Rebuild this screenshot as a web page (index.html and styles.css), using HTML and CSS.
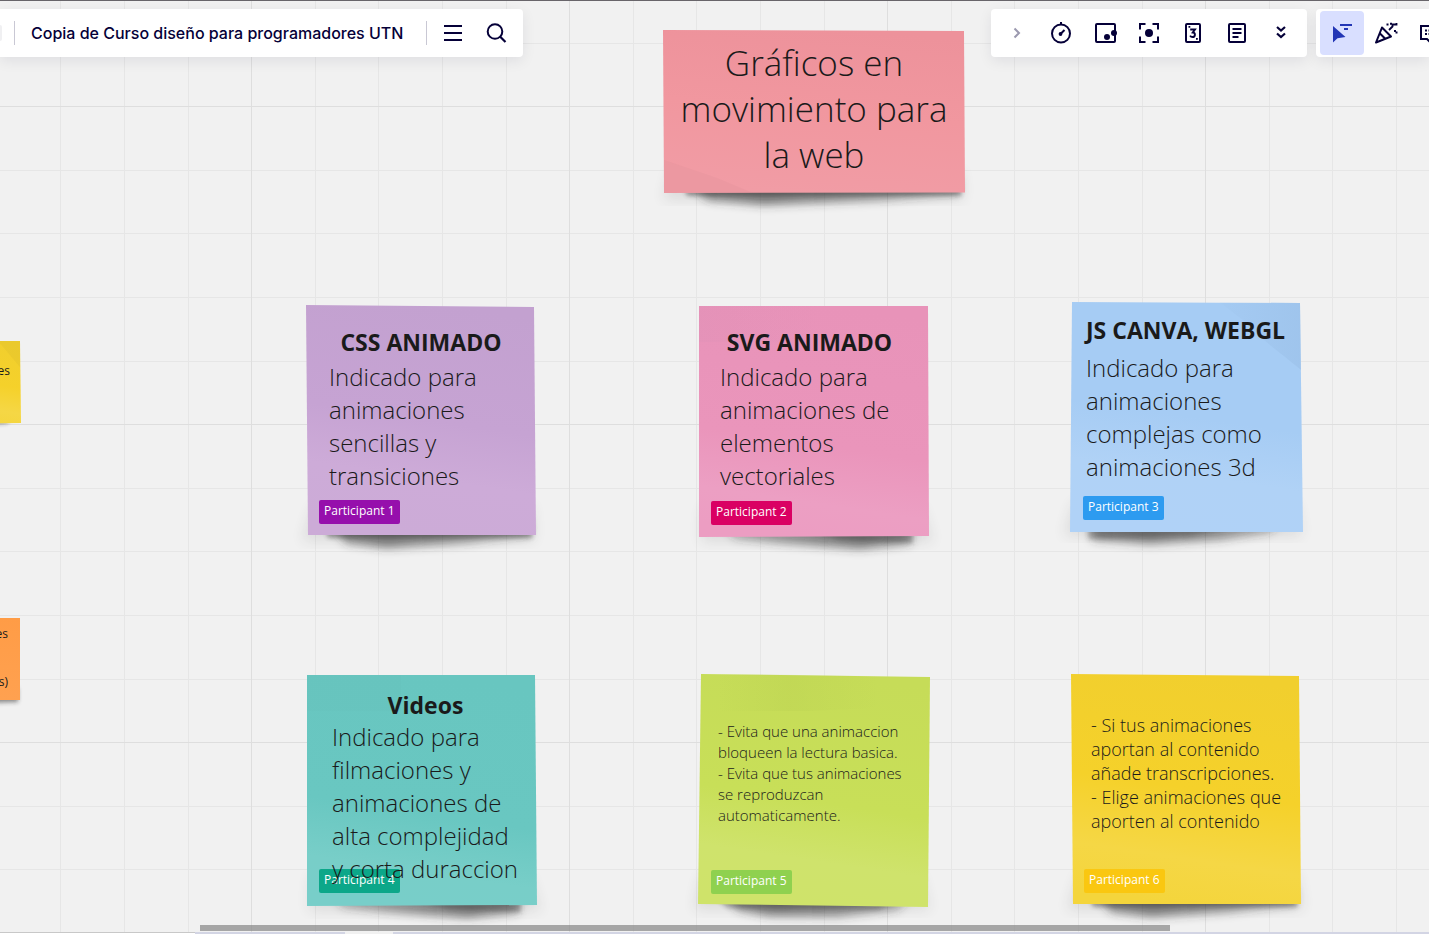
FILE: index.html
```html
<!DOCTYPE html>
<html lang="es">
<head>
<meta charset="utf-8">
<meta name="viewport" content="width=device-width, initial-scale=1">
<title>Copia de Curso diseño para programadores UTN</title>
<link rel="stylesheet" href="styles.css">
</head>
<body>
<svg class="defs" width="0" height="0" aria-hidden="true">
  <defs>
    <filter id="soft" x="-20%" y="-100%" width="140%" height="300%"><feGaussianBlur stdDeviation="5"/></filter>
    <filter id="edge" x="-20%" y="-100%" width="140%" height="300%"><feGaussianBlur stdDeviation="2"/></filter>
    <filter id="haze" x="-20%" y="-20%" width="140%" height="140%"><feGaussianBlur stdDeviation="7"/></filter>
    <linearGradient id="rose" x1="0.6" y1="0" x2="0.45" y2="1"><stop offset="0" stop-color="#ed929b"/><stop offset=".5" stop-color="#f1979f"/><stop offset="1" stop-color="#f19ca5"/></linearGradient>
    <linearGradient id="violet" x1="0.6" y1="0" x2="0.45" y2="1"><stop offset="0" stop-color="#c3a1d0"/><stop offset=".5" stop-color="#c6a3d3"/><stop offset=".75" stop-color="#cdabd8"/><stop offset="1" stop-color="#ccabd7"/></linearGradient>
    <linearGradient id="pink" x1="0.6" y1="0" x2="0.45" y2="1"><stop offset="0" stop-color="#e893b9"/><stop offset=".6" stop-color="#ea95bb"/><stop offset=".85" stop-color="#ec9fc3"/><stop offset="1" stop-color="#ec9dc2"/></linearGradient>
    <linearGradient id="blue" x1="0.6" y1="0" x2="0.45" y2="1"><stop offset="0" stop-color="#a6ccf4"/><stop offset=".5" stop-color="#a6ccf4"/><stop offset=".75" stop-color="#b0d2f6"/><stop offset="1" stop-color="#b0d2f7"/></linearGradient>
    <linearGradient id="teal" x1="0.6" y1="0" x2="0.45" y2="1"><stop offset="0" stop-color="#68c6c0"/><stop offset=".6" stop-color="#69c7c1"/><stop offset=".85" stop-color="#78cec8"/><stop offset="1" stop-color="#78cec9"/></linearGradient>
    <linearGradient id="lime" x1="0.6" y1="0" x2="0.45" y2="1"><stop offset="0" stop-color="#c6dc58"/><stop offset=".55" stop-color="#c8df58"/><stop offset=".8" stop-color="#cfe36c"/><stop offset="1" stop-color="#cfe36a"/></linearGradient>
    <linearGradient id="yellow" x1="0.6" y1="0" x2="0.45" y2="1"><stop offset="0" stop-color="#f1cf2e"/><stop offset=".5" stop-color="#f5d12a"/><stop offset=".8" stop-color="#f5d745"/><stop offset="1" stop-color="#f4d53c"/></linearGradient>
    <linearGradient id="orange" x1="0" y1="0" x2="0" y2="1"><stop offset="0" stop-color="#ff9c46"/><stop offset="1" stop-color="#ffa150"/></linearGradient>
    <linearGradient id="shadeL" x1="0" x2="1"><stop offset="0" stop-color="#333" stop-opacity=".5"/><stop offset=".3" stop-color="#333" stop-opacity=".6"/><stop offset="1" stop-color="#333" stop-opacity=".35"/></linearGradient>
    <linearGradient id="shadeR" x1="0" x2="1"><stop offset="0" stop-color="#333" stop-opacity=".35"/><stop offset=".75" stop-color="#333" stop-opacity=".6"/><stop offset="1" stop-color="#333" stop-opacity=".45"/></linearGradient>
    <linearGradient id="foldPink" x1="0" x2="1"><stop offset="0" stop-color="#d98fb5" stop-opacity=".25"/><stop offset="1" stop-color="#d98fb5" stop-opacity="0"/></linearGradient>
    <linearGradient id="foldLime" x1="0" x2="1"><stop offset="0" stop-color="#b8cf50" stop-opacity="0"/><stop offset=".45" stop-color="#b8cf50" stop-opacity=".3"/><stop offset="1" stop-color="#b8cf50" stop-opacity="0"/></linearGradient>
    <linearGradient id="foldBlue" x1="0" x2="1"><stop offset="0" stop-color="#98bde5" stop-opacity=".1"/><stop offset="1" stop-color="#98bde5" stop-opacity=".5"/></linearGradient>
  </defs>
</svg>

<header class="topbar">
  <div class="panel panel-board">
    <span class="logo-edge"></span>
    <span class="rule"></span>
    <h1 class="board-name">Copia de Curso diseño para programadores UTN</h1>
    <span class="rule"></span>
    <button class="tool" type="button" aria-label="Menú"><svg class="icon" viewBox="0 0 24 24"><path d="M3 5h18M3 12h18M3 19h18" stroke-width="2"/></svg></button>
    <button class="tool" type="button" aria-label="Buscar"><svg class="icon" viewBox="0 0 24 24"><circle cx="10" cy="10.5" r="7.300" stroke-width="2"/><path d="M15 15.5l5.500 5.500" stroke-width="2.200"/></svg></button>
  </div>
  <div class="panel panel-tools">
    <button class="tool muted" type="button" aria-label="Ocultar"><svg class="icon" viewBox="0 0 24 24"><path d="M9.500 7.500l4.500 4.500-4.500 4.500" stroke-width="2"/></svg></button>
    <button class="tool" type="button" aria-label="Temporizador"><svg class="icon" viewBox="0 0 24 24"><circle cx="12" cy="12.500" r="9" stroke-width="2"/><path d="M12 1v3M11.500 13l4-4" stroke-width="2"/><circle class="solid" cx="11.500" cy="13" r="1.900"/></svg></button>
    <button class="tool" type="button" aria-label="Marcos"><svg class="icon" viewBox="0 0 24 24"><rect x="3" y="3" width="19" height="18" rx="1" stroke-width="2"/><circle class="solid" cx="14" cy="16" r="3"/><circle class="solid" cx="21" cy="12" r="3"/></svg></button>
    <button class="tool" type="button" aria-label="Enfocar"><svg class="icon" viewBox="0 0 24 24"><path d="M3 8.500V3h5.500M15.500 3H21v5.500M21 15.500V21h-5.500M8.500 21H3v-5.500" stroke-width="2"/><circle class="solid" cx="12" cy="12" r="4"/></svg></button>
    <button class="tool" type="button" aria-label="Estimación"><svg class="icon" viewBox="0 0 24 24"><rect x="5" y="3" width="14" height="18" rx="1" stroke-width="2"/><path d="M9.200 8.500h4.800l-2.200 3c3 .2 2.700 4.500-.2 4.500-1.200 0-2-.5-2.500-1.400" stroke-width="1.900"/><path class="solid" d="M7.500 5h1.800v1.800H7.500zM15 17h1.800v1.800H15z"/></svg></button>
    <button class="tool" type="button" aria-label="Notas"><svg class="icon" viewBox="0 0 24 24"><rect x="4" y="3" width="16" height="18" rx="1" stroke-width="2"/><path d="M7.500 8h9M7.500 12h9M7.500 16h6" stroke-width="2"/></svg></button>
    <button class="tool" type="button" aria-label="Más"><svg class="icon" viewBox="0 0 24 24"><path d="M8 6l4 3.500 4-3.500M8 12.500l4 3.500 4-3.500" stroke-width="2.200"/></svg></button>
  </div>
  <div class="panel panel-collab">
    <button class="tool active" type="button" aria-label="Seleccionar"><svg class="icon" viewBox="0 0 24 24"><path class="solid" d="M3 5v16.500l4.500-4.300 8-1.200z"/><path d="M10 4h12M14 8h4" stroke-width="2"/></svg></button>
    <button class="tool" type="button" aria-label="Reacciones"><svg class="icon" viewBox="0 0 24 24"><path d="M8 6.500L2 21.500l15-6zM6 12.500l5 5" stroke-width="2" stroke-linejoin="round"/><path d="M15 9l4-4M18.500 6V3.500h4V2" stroke-width="1.800"/><path class="solid" d="M12.500 2.500h2v2h-2zM16 1.800h2v2h-2zM20 9h2v2h-2zM21.500 10.500h2v2h-2z"/></svg></button>
    <button class="tool" type="button" aria-label="Comentarios"><svg class="icon" viewBox="0 0 24 24"><path d="M3 5h18v13h-6l-3 3-3-3H3z" stroke-width="2"/><path d="M7 9.500h10M7 13h10" stroke-width="2" stroke-dasharray="2 1.500"/></svg></button>
  </div>
</header>

<main class="board">
  <article class="note note-heading">
    <svg class="paper" viewBox="0 0 302 163"><path d="M8 140h290l2 30H0z" fill="#222" opacity=".1" filter="url(#haze)"/><path d="M22 150H296V163L220 170 100 175 44 170z" fill="url(#shadeL)" filter="url(#soft)"/><path d="M20 155H298V166H24z" fill="#333" opacity=".4" filter="url(#edge)"/><path d="M0 0L301 1 302 162.500 1 163z" fill="url(#rose)"/><path d="M1 130L54 148 90 163H1z" fill="#d98f98" opacity=".22"/></svg>
    <p class="heading-text">Gráficos en<br>movimiento para<br>la web</p>
  </article>

  <article class="note note-css">
    <svg class="paper" viewBox="0 0 230 230"><path d="M8 200h218l2 36H-4z" fill="#222" opacity=".1" filter="url(#haze)"/><path d="M22 216H224V230L160 238 80 243 40 238z" fill="url(#shadeL)" filter="url(#soft)"/><path d="M18 222H226V233H22z" fill="#333" opacity=".4" filter="url(#edge)"/><path d="M0 0L228 2 230 230H2z" fill="url(#violet)"/></svg>
    <h2 class="note-title">CSS ANIMADO</h2>
    <p class="note-text">Indicado para<br>animaciones<br>sencillas y<br>transiciones</p>
    <span class="tag tag-purple">Participant 1</span>
  </article>

  <article class="note note-svg">
    <svg class="paper" viewBox="0 0 230 231"><path d="M4 200h218l12 36H2z" fill="#222" opacity=".1" filter="url(#haze)"/><path d="M22 216H212V238L160 243 80 237 36 232z" fill="url(#shadeR)" filter="url(#soft)"/><path d="M100 222H214V237L140 234z" fill="#333" opacity=".3" filter="url(#edge)"/><path d="M0 0H229L230 230 0 231z" fill="url(#pink)"/><path d="M0 0H120V36H0z" fill="url(#foldPink)"/></svg>
    <h2 class="note-title">SVG ANIMADO</h2>
    <p class="note-text">Indicado para<br>animaciones de<br>elementos<br>vectoriales</p>
    <span class="tag tag-magenta">Participant 2</span>
  </article>

  <article class="note note-js">
    <svg class="paper" viewBox="0 0 234 230"><path d="M4 200h222l6 34H-6z" fill="#222" opacity=".1" filter="url(#haze)"/><path d="M20 216H216L200 230 150 238 80 242 22 238z" fill="url(#shadeL)" filter="url(#soft)"/><path d="M18 222H190L120 234 18 237z" fill="#333" opacity=".25" filter="url(#edge)"/><path d="M2 0L230 1 233 230 0 230z" fill="url(#blue)"/><path d="M150 .6L230 1 231 68C210 50 196 42 178 22z" fill="url(#foldBlue)"/></svg>
    <h2 class="note-title">JS CANVA, WEBGL</h2>
    <p class="note-text">Indicado para<br>animaciones<br>complejas como<br>animaciones 3d</p>
    <span class="tag tag-blue">Participant 3</span>
  </article>

  <article class="note note-video">
    <svg class="paper" viewBox="0 0 230 231"><path d="M4 200h218l12 36H2z" fill="#222" opacity=".1" filter="url(#haze)"/><path d="M22 216H212V238L160 243 80 237 36 232z" fill="url(#shadeR)" filter="url(#soft)"/><path d="M100 222H214V237L140 234z" fill="#333" opacity=".3" filter="url(#edge)"/><path d="M0 0H228L230 230 0 231z" fill="url(#teal)"/><path d="M0 0H94V36H0z" fill="#62bdb8" opacity=".15"/></svg>
    <h2 class="note-title">Videos</h2>
    <p class="note-text">Indicado para<br>filmaciones y<br>animaciones de<br>alta complejidad<br>y corta duraccion</p>
    <span class="tag tag-green">Participant 4</span>
  </article>

  <article class="note note-avoid">
    <svg class="paper" viewBox="0 0 232 233"><path d="M4 200h218l10 36H-4z" fill="#222" opacity=".1" filter="url(#haze)"/><path d="M22 216H218L200 236 140 243 70 242 40 236z" fill="url(#shadeL)" filter="url(#soft)"/><path d="M14 222H210L180 236 30 234z" fill="#333" opacity=".3" filter="url(#edge)"/><path d="M3 0L232 3 230 233 0 230z" fill="url(#lime)"/><path d="M20 0L180 2V34L110 37H20z" fill="url(#foldLime)"/></svg>
    <p class="note-text">- Evita que una animaccion<br>bloqueen la lectura basica.<br>- Evita que tus animaciones<br>se reproduzcan<br>automaticamente.</p>
    <span class="tag tag-lime">Participant 5</span>
  </article>

  <article class="note note-choose">
    <svg class="paper" viewBox="0 0 230 230"><path d="M8 200h218l6 36H-4z" fill="#222" opacity=".1" filter="url(#haze)"/><path d="M22 216H224V230L160 238 80 243 40 238z" fill="url(#shadeL)" filter="url(#soft)"/><path d="M18 222H226V233H22z" fill="#333" opacity=".4" filter="url(#edge)"/><path d="M0 0L228 2 230 230H2z" fill="url(#yellow)"/></svg>
    <p class="note-text">- Si tus animaciones<br>aportan al contenido<br>añade transcripciones.<br>- Elige animaciones que<br>aporten al contenido</p>
    <span class="tag tag-yellow">Participant 6</span>
  </article>

  <article class="note note-edge note-edge-yellow">
    <svg class="paper" viewBox="0 0 81 83"><path d="M2 70H68V82L10 87z" fill="#222" opacity=".45" filter="url(#edge)"/><path d="M0 0H80L81 82 0 83z" fill="url(#yellow)"/><path d="M58 0H80V26z" fill="#d9b92a" opacity=".25"/></svg>
    <p class="edge-text">es</p>
  </article>
  <article class="note note-edge note-edge-orange">
    <svg class="paper" viewBox="0 0 81 83"><path d="M2 70H78V84L10 86z" fill="#222" opacity=".5" filter="url(#edge)"/><path d="M0 0H80V82H0z" fill="url(#orange)"/></svg>
    <p class="edge-text">es</p>
    <p class="edge-text">s)</p>
  </article>
</main>

<div class="scroll-thumb"></div>
<footer class="bottom-edge"><span class="edge-plain"></span><span class="edge-tint"></span><span class="edge-gap"></span><span class="edge-rest"></span></footer>
</body>
</html>
```

FILE: styles.css
```css
* {
  box-sizing: border-box;
}

body {
  position: relative;
  display: flex;
  flex-direction: column;
  height: 100vh;
  margin: 0;
  overflow: hidden;
  border-top: 1px solid #68656a;
  background: #f1f1f1;
  color: #1a1a1a;
  font-family: "Open Sans", "Noto Sans", sans-serif;
}

h1, h2, p {
  margin: 0;
}

.defs {
  position: absolute;
}

/* Toolbars floating over the board */
.topbar {
  position: absolute;
  z-index: 2;
  top: 8px;
  left: 0;
  right: 0;
  display: flex;
}

.panel {
  display: flex;
  flex: none;
  align-items: center;
  height: 48px;
  padding: 2px 4px;
  border-radius: 4px;
  background: #fff;
  box-shadow: 0 4px 14px rgba(5, 0, 56, 0.08);
}

.panel-board {
  padding-left: 0;
  border-radius: 0 4px 4px 0;
}

.panel-tools {
  margin-left: auto;
}

.panel-collab {
  width: 113px;
  margin-left: 9px;
  padding-right: 0;
  overflow: hidden;
  border-radius: 4px 0 0 4px;
}

.logo-edge {
  width: 2px;
  height: 16px;
  margin-right: 12px;
  border-radius: 0 8px 8px 0;
  background: #f0f0f2;
}

.rule {
  width: 1px;
  height: 24px;
  background: #c9c8d4;
}

.board-name {
  padding: 0 23px 0 16px;
  color: #050038;
  font-family: Inter, "Open Sans", sans-serif;
  font-size: 16px;
  font-weight: 500;
  line-height: 24px;
  white-space: nowrap;
}

.panel-board .rule + .tool {
  margin-left: 4px;
}

.tool {
  display: flex;
  flex: none;
  align-items: center;
  justify-content: center;
  width: 44px;
  height: 44px;
  padding: 0;
  border: 0;
  border-radius: 4px;
  background: none;
  color: #050038;
}

.tool.muted {
  color: #9b99af;
}

.tool.active {
  background: #d9dfff;
  color: #2336b5;
}

.icon {
  width: 24px;
  height: 24px;
  fill: none;
  stroke: currentColor;
}

.icon .solid {
  fill: currentColor;
  stroke: none;
}

/* Board with its five-cell grid */
.board {
  position: relative;
  flex: 1;
  overflow: hidden;
  background-image:
    linear-gradient(to right, #dedede 1px, transparent 1px),
    linear-gradient(to bottom, #dedede 1px, transparent 1px),
    linear-gradient(to right, transparent 64px, #e6e6e6 64px 65px, transparent 65px 127px, #e6e6e6 127px 128px, transparent 128px 191px, #e6e6e6 191px 192px, transparent 192px 255px, #e6e6e6 255px 256px, transparent 256px),
    linear-gradient(to bottom, transparent 64px, #e6e6e6 64px 65px, transparent 65px 127px, #e6e6e6 127px 128px, transparent 128px 191px, #e6e6e6 191px 192px, transparent 192px 255px, #e6e6e6 255px 256px, transparent 256px);
  background-size: 318px 318px;
  background-position: 251px 105px;
}

.note {
  position: absolute;
  display: flex;
  flex-direction: column;
  width: 230px;
  height: 230px;
  white-space: nowrap;
}

.paper {
  position: absolute;
  inset: 0;
  width: 100%;
  height: 100%;
  overflow: visible;
}

.heading-text,
.note-title,
.note-text,
.edge-text {
  position: relative;
  z-index: 1;
}

.note-title {
  font-size: 23px;
  font-weight: 700;
  line-height: 30px;
  text-align: center;
}

.note-text {
  font-size: 24px;
  font-weight: 300;
  line-height: 33px;
}

.note-heading {
  top: 29px;
  left: 663px;
  width: 302px;
  height: 163px;
  padding-top: 10px;
}

.heading-text {
  font-size: 35px;
  font-weight: 300;
  line-height: 46px;
  text-align: center;
}

.note-css {
  top: 304px;
  left: 306px;
  gap: 3px;
  padding: 22px 23px;
}

.note-svg {
  top: 305px;
  left: 699px;
  height: 231px;
  gap: 3px;
  padding: 21px 30px 0 21px;
}

.note-js {
  top: 301px;
  left: 1070px;
  width: 234px;
  gap: 6px;
  padding: 13px 20px 0 16px;
}

.note-video {
  top: 674px;
  left: 307px;
  height: 231px;
  padding: 15px 18px 0 25px;
}

.note-avoid {
  top: 673px;
  left: 698px;
  width: 232px;
  height: 233px;
  padding: 47px 20px 0;
}

.note-avoid .note-text {
  font-size: 15px;
  line-height: 21px;
}

.note-choose {
  top: 673px;
  left: 1071px;
  padding: 39px 20px 0;
}

.note-choose .note-text {
  font-size: 18px;
  line-height: 24px;
}

.note-edge {
  width: 81px;
  height: 83px;
}

.note-edge-yellow {
  top: 340px;
  left: -60px;
  padding: 22px 11px 0;
}

.note-edge-orange {
  top: 617px;
  left: -60px;
  gap: 32px;
  padding: 8px 13px 0;
}

.edge-text {
  font-size: 12px;
  line-height: 16px;
  text-align: right;
}

/* Author labels pinned over the notes */
.tag {
  position: absolute;
  bottom: 12px;
  left: 12px;
  padding: 0 5px 2px;
  border-radius: 2px;
  color: #fff;
  font-size: 12px;
  font-weight: 400;
  line-height: 22px;
}

.note-css .tag,
.note-choose .tag {
  bottom: 11px;
  left: 13px;
}

.note-js .tag,
.note-avoid .tag {
  left: 13px;
}

.note-video .tag,
.note-avoid .tag {
  bottom: 13px;
}

.tag-purple { background: #960fac; }
.tag-magenta { background: #da0063; }
.tag-blue { background: #2d9bf0; }
.tag-green { background: #0ca789; }
.tag-lime { background: #8fd14f; }
.tag-yellow { background: #fac710; }

/* Bottom strip */
.scroll-thumb {
  position: absolute;
  z-index: 2;
  bottom: 3px;
  left: 14%;
  width: 970px;
  height: 6px;
  background: rgba(128, 128, 128, 0.66);
}

.bottom-edge {
  display: flex;
  flex: none;
  height: 2px;
}

.edge-plain {
  width: 195px;
  border-top: 1px solid #c8c8c8;
  background: #fff;
}

.edge-tint {
  width: 150px;
  background: #d3d5e4;
}

.edge-gap {
  width: 48px;
  background: #f1f1f1;
}

.edge-rest {
  flex: 1;
  background: #d3d5e4;
}
```
